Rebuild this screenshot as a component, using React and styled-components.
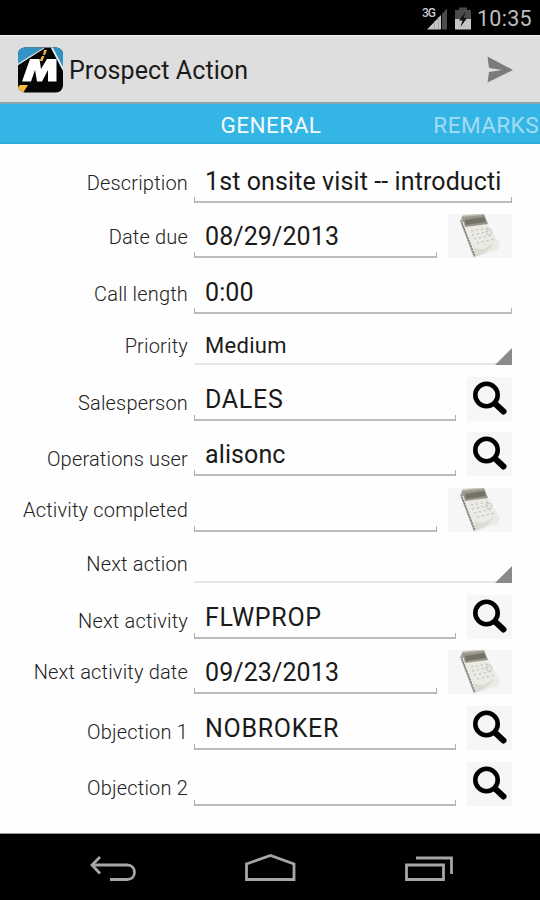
import React from 'react';
import styled, { createGlobalStyle } from 'styled-components';

const GlobalStyle = createGlobalStyle`
  * {
    box-sizing: border-box;
  }

  body {
    margin: 0;
    background: #fff;
    font-family: Roboto, 'Liberation Sans', sans-serif;
  }
`;

const Screen = styled.div`
  display: flex;
  flex-direction: column;
  width: 540px;
  height: 900px;
  overflow: hidden;
  background: #fefefe;
`;

const StatusBar = styled.div`
  display: flex;
  flex: none;
  justify-content: flex-end;
  align-items: center;
  gap: 6px;
  height: 35px;
  padding-right: 8px;
  background: #000;
`;

const Clock = styled.span`
  padding-top: 3px;
  color: #bebebe;
  font-size: 21.5px;
  line-height: 32px;
  letter-spacing: 0.3px;
`;

const ActionBar = styled.header`
  display: flex;
  flex: none;
  align-items: center;
  height: 69px;
  padding: 1px 26px 0 17px;
  border-top: 1px solid #f2f2f2;
  border-bottom: 2px solid #8ba4ae;
  background: #dedede;
`;

const Title = styled.h1`
  flex: 1;
  margin: 0 0 0 5px;
  padding-top: 2px;
  color: #1a1a1a;
  font-size: 25px;
  font-weight: 400;
  line-height: 32px;
  letter-spacing: 0.1px;
`;

const Tabs = styled.nav`
  display: flex;
  flex: none;
  justify-content: flex-end;
  height: 40px;
  padding-right: 1px;
  border-bottom: 2px solid #2fadda;
  background: #33b5e5;
`;

const Tab = styled.span`
  margin-left: 112px;
  color: ${({ $active }) => ($active ? '#f4fbfe' : '#a3dcf3')};
  font-size: 22.5px;
  line-height: 42px;
  letter-spacing: 0.45px;
  white-space: nowrap;
`;

const Form = styled.form`
  display: flex;
  flex: 1;
  flex-direction: column;
  padding: 4px 28px 0 0;
`;

const Row = styled.div`
  display: flex;
  flex: none;
  align-items: flex-end;
  height: ${({ $height }) => $height}px;
`;

const Label = styled.label`
  width: 188px;
  margin-right: 6px;
  padding-bottom: ${({ $lift }) => $lift}px;
  color: #222;
  font-size: 20px;
  font-weight: 300;
  line-height: 24px;
  letter-spacing: 0.18px;
  text-align: right;
  white-space: nowrap;
`;

const Field = styled.div`
  flex: 1;
  height: 44px;
  padding-left: 11px;
  background:
    linear-gradient(#b0b0b0, #b0b0b0) left bottom / 1px 6px no-repeat,
    linear-gradient(#b0b0b0, #b0b0b0) right bottom / 1px 6px no-repeat,
    linear-gradient(#bcbcbc, #bcbcbc) left bottom / 100% 2px no-repeat;
  color: #1a1a1a;
  font-size: 25px;
  line-height: 46px;
  letter-spacing: ${({ $caps }) => ($caps ? 0.7 : 0.1)}px;
  white-space: nowrap;
`;

const Spinner = styled(Field)`
  display: flex;
  justify-content: space-between;
  align-items: flex-end;
  background: linear-gradient(#e6e6e6, #e6e6e6) left bottom / 100% 2px no-repeat;
  font-size: 22px;
  line-height: 39px;
  letter-spacing: 0.3px;
`;

const Corner = styled.span`
  width: 17px;
  height: 17px;
  margin-left: auto;
  background: #8a8a8a;
  clip-path: polygon(100% 0, 100% 100%, 0 100%);
`;

const IconButton = styled.button`
  display: flex;
  justify-content: center;
  align-items: center;
  width: ${({ $wide }) => ($wide ? 64 : 45)}px;
  height: 44px;
  margin-left: 11px;
  padding: 0;
  border: 0;
  background: #f6f6f6;
`;

const NavBar = styled.footer`
  display: flex;
  flex: none;
  justify-content: space-between;
  height: 67px;
  padding: 18px 86px 0 89px;
  border-top: 1px solid #999;
  background: #000;
`;

const SignalIcon = () => (
  <svg width="27" height="24" viewBox="0 0 27 24">
    <text x="0" y="10.5" fill="#c8c8c8" fontSize="12" fontWeight="500" textLength="14">
      3G
    </text>
    <path d="M5 23.5 L19 9 V23.5 Z" fill="#c4c4c4" />
    <path d="M20 8 L25 2.5 V23.5 H20 Z" fill="#4b4b4b" />
    <path d="M12.5 15 V23 M16.5 11 V23" stroke="#999" strokeWidth=".8" />
  </svg>
);

const BatteryIcon = () => (
  <svg width="16" height="24" viewBox="0 0 16 24">
    <path d="M4 1.5 H12 V4 H16 V14 H0 V4 H4 Z" fill="#4b4b4b" />
    <path d="M0 13 H16 V23.5 H0 Z" fill="#c4c4c4" />
    <path d="M10.5 6 L4 14.5 H7.5 L5.5 21 L12 12 H8.5 Z" fill="#111" />
  </svg>
);

const AppLogo = () => (
  <svg width="47" height="46" viewBox="0 0 47 46">
    <defs>
      <clipPath id="tile">
        <rect x="1" y="0.5" width="45" height="45" rx="7" />
      </clipPath>
    </defs>
    <g clipPath="url(#tile)">
      <rect width="47" height="46" fill="#050505" />
      <path d="M0 0 H27 L0 19 Z" fill="#3295c5" />
      <path d="M34 0 H47 V25 Z" fill="#3295c5" />
      <path d="M0 18 L27 1" stroke="#d5dce0" strokeWidth="1.3" />
      <path d="M34.5 0 L47 24" stroke="#eee" strokeWidth="1.8" />
      <path d="M27 3 L30 3 L28 8 L26 8 Z M25 9 L27.5 9 L25.5 14 H22.5 Z" fill="#eeb43a" />
      <path d="M3 38 H11 L6 46 H0 V41 Z" fill="#f5bd3d" />
      <path
        d="M13 12 H22.5 L24 22 L30 12 H39.5 V34.5 H31 V23 L25 34.5 H20 L18 23 L14 34.5 H5 Z"
        fill="#fff"
      />
    </g>
  </svg>
);

const SendIcon = () => (
  <svg width="27" height="28" viewBox="0 0 27 28">
    <path d="M0.5 0.5 L26 14 L0.5 26.5 L2 16 L15 14 L2 12 Z" fill="#7b7b7b" />
  </svg>
);

const SearchIcon = () => (
  <svg width="45" height="44" viewBox="0 0 45 44" fill="none" stroke="#000">
    <circle cx="19.5" cy="18" r="11.2" strokeWidth="4.6" />
    <path d="M29 27.5 L36.5 34.5" strokeWidth="6" strokeLinecap="round" />
    <path d="M26 25 L29 28" strokeWidth="3.5" />
  </svg>
);

const CalendarIcon = () => (
  <svg width="64" height="44" viewBox="0 0 64 44">
    <path d="M12 7 L15 2 L27 41 L26 44 Z" fill="#a5a49c" />
    <path d="M14 8 L38 7 L52 30 Q51 36 46 37 L27 43 Z" fill="#ebeae4" />
    <path d="M14 2 L36 0 L40 10 L17 13 Z" fill="#98978a" />
    <path d="M17 6 L36 3 L38 8 L18 11 Z" fill="#737266" />
    <path d="M15 2 L36 0" stroke="#c6c5ba" strokeWidth="2" strokeDasharray="3 1" />
    <path d="M26 33 Q35 39 46 28 Q42 38 27 43 Z" fill="#dcdbd3" />
    <path
      d="M23 17 L40 14 M24 21 L43 17 M26 25 L45 21 M29 29 L47 25"
      stroke="#bfbeb6"
      strokeWidth="1.2"
      strokeDasharray="2 3"
    />
    <circle cx="41" cy="18" r="3" fill="none" stroke="#c9c8c0" />
    <path d="M14 9 L27 42" stroke="#77766d" strokeWidth="1.2" strokeDasharray="2 1" />
  </svg>
);

const BackIcon = () => (
  <svg width="48" height="30" viewBox="0 0 48 30" fill="none" stroke="#a6a6a6" strokeWidth="2.8">
    <path d="M3 13 H38 C48 13 48 27.5 38 27.5 H21" />
    <path d="M11 5 L3 13 L11 21.5" />
  </svg>
);

const HomeIcon = () => (
  <svg width="52" height="30" viewBox="0 0 52 30" fill="none" stroke="#a6a6a6" strokeWidth="2.8">
    <path d="M1.5 27.5 V12 L25.5 3.5 L49 12 V27.5 Z" />
  </svg>
);

const RecentIcon = () => (
  <svg width="50" height="30" viewBox="0 0 50 30" fill="none" stroke="#a6a6a6" strokeWidth="2.8">
    <path d="M2.5 13 H39.5 V27.5 H2.5 Z" />
    <path d="M12 6 H47.5 V22" />
  </svg>
);

const fields = [
  { label: 'Description', value: '1st onsite visit -- introducti', height: 55, lift: 8 },
  { label: 'Date due', value: '08/29/2013', type: 'date', height: 55, lift: 9 },
  { label: 'Call length', value: '0:00', height: 56, lift: 8 },
  { label: 'Priority', value: 'Medium', type: 'spinner', height: 51, lift: 7 },
  { label: 'Salesperson', value: 'DALES', type: 'search', height: 56, lift: 6, caps: true },
  { label: 'Operations user', value: 'alisonc', type: 'search', height: 55, lift: 5 },
  { label: 'Activity completed', value: '', type: 'date', height: 56, lift: 10 },
  { label: 'Next action', value: '', type: 'spinner', height: 51, lift: 7 },
  { label: 'Next activity', value: 'FLWPROP', type: 'search', height: 56, lift: 6, caps: true },
  { label: 'Next activity date', value: '09/23/2013', type: 'date', height: 55, lift: 10 },
  { label: 'Objection 1', value: 'NOBROKER', type: 'search', height: 56, lift: 6, caps: true },
  { label: 'Objection 2', value: '', type: 'search', height: 56, lift: 6 },
];

const FormRow = ({ label, value, type, height, lift, caps }) => (
  <Row $height={height}>
    <Label $lift={lift}>{label}</Label>
    {type === 'spinner' ? (
      <Spinner>
        {value}
        <Corner />
      </Spinner>
    ) : (
      <Field $caps={caps}>{value}</Field>
    )}
    {type === 'date' && (
      <IconButton type="button" aria-label="Pick date" $wide>
        <CalendarIcon />
      </IconButton>
    )}
    {type === 'search' && (
      <IconButton type="button" aria-label="Search">
        <SearchIcon />
      </IconButton>
    )}
  </Row>
);

const App = () => (
  <Screen>
    <GlobalStyle />
    <StatusBar>
      <SignalIcon />
      <BatteryIcon />
      <Clock>10:35</Clock>
    </StatusBar>
    <ActionBar>
      <AppLogo />
      <Title>Prospect Action</Title>
      <SendIcon />
    </ActionBar>
    <Tabs>
      <Tab $active>GENERAL</Tab>
      <Tab>REMARKS</Tab>
    </Tabs>
    <Form>
      {fields.map((field) => (
        <FormRow key={field.label} {...field} />
      ))}
    </Form>
    <NavBar>
      <BackIcon />
      <HomeIcon />
      <RecentIcon />
    </NavBar>
  </Screen>
);

export default App;
